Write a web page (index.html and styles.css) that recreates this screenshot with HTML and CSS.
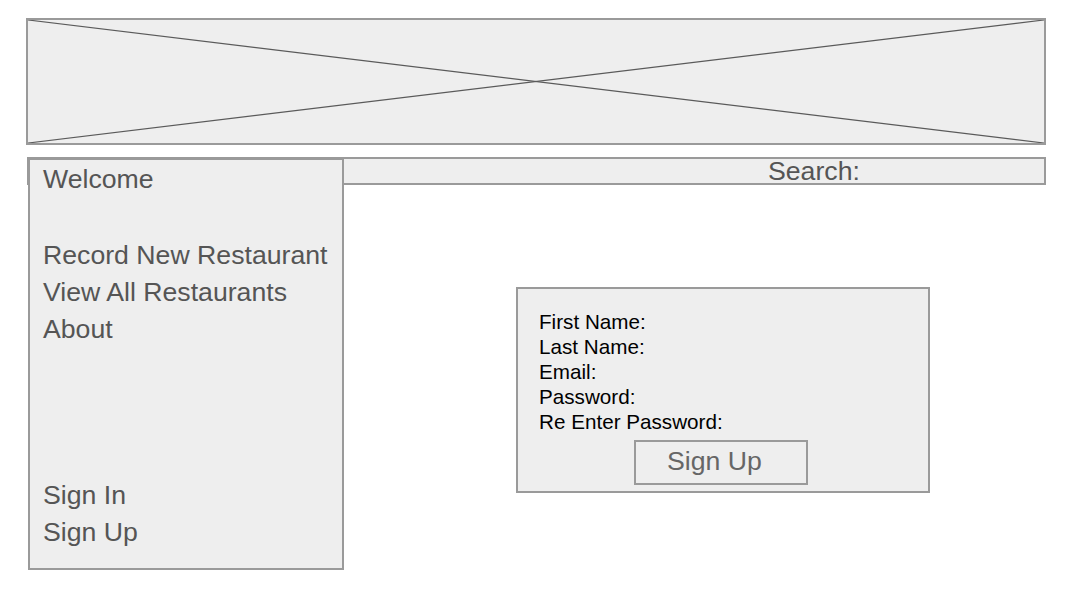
FILE: index.html
```html
<!DOCTYPE html>
<html lang="en">
<head>
<meta charset="utf-8">
<title>Sign Up</title>
<link rel="stylesheet" href="styles.css">
</head>
<body>
<div class="page">
  <div class="banner">
    <svg class="banner-x" viewBox="0 0 100 100" preserveAspectRatio="none">
      <line x1="0" y1="0" x2="100" y2="100" vector-effect="non-scaling-stroke"/>
      <line x1="0" y1="100" x2="100" y2="0" vector-effect="non-scaling-stroke"/>
    </svg>
  </div>
  <div class="main">
    <div class="search">Search:</div>
    <nav class="sidebar">
      <div class="nav-top">
        <div class="nav-item welcome">Welcome</div>
        <div class="nav-item">Record New Restaurant</div>
        <div class="nav-item">View All Restaurants</div>
        <div class="nav-item">About</div>
      </div>
      <div class="nav-bottom">
        <div class="nav-item">Sign In</div>
        <div class="nav-item">Sign Up</div>
      </div>
    </nav>
    <div class="content">
      <div class="form">
        <div class="field">First Name:</div>
        <div class="field">Last Name:</div>
        <div class="field">Email:</div>
        <div class="field">Password:</div>
        <div class="field">Re Enter Password:</div>
        <div class="button">Sign Up</div>
      </div>
    </div>
  </div>
</div>
</body>
</html>
```
FILE: styles.css
```css
html, body {
  margin: 0;
  padding: 0;
  background: #ffffff;
}
body {
  font-family: "Liberation Sans", Arial, sans-serif;
}
.page {
  padding: 18px 0 0 26px;
  width: 1020px;
}
.banner {
  box-sizing: border-box;
  width: 1020px;
  height: 127px;
  border: 2px solid #9a9a9a;
  background: #eeeeee;
}
.banner-x {
  display: block;
  width: 100%;
  height: 100%;
}
.banner-x line {
  stroke: #5a5a5a;
  stroke-width: 1.2;
}
.main {
  margin: 12px 0 0 1px;
  width: 1019px;
  display: grid;
  grid-template-columns: 316px 1fr;
  grid-template-rows: 28px auto;
}
.search {
  grid-column: 1 / 3;
  grid-row: 1;
  box-sizing: border-box;
  height: 28px;
  border: 2px solid #9a9a9a;
  background: #eeeeee;
  color: #555555;
  font-size: 26.67px;
  line-height: 24px;
  padding-left: 739px;
  overflow: visible;
  white-space: nowrap;
}
.sidebar {
  grid-column: 1;
  grid-row: 1 / 3;
  z-index: 1;
  margin: 1px 0 0 1px;
  box-sizing: border-box;
  width: 316px;
  height: 412px;
  border: 2px solid #9a9a9a;
  background: #eeeeee;
  padding: 1px 0 17px 13px;
  display: flex;
  flex-direction: column;
  justify-content: space-between;
  color: #555555;
  font-size: 26.67px;
  line-height: 37px;
}
.nav-item {
  white-space: nowrap;
}
.welcome {
  margin-bottom: 39px;
}
.content {
  grid-column: 2;
  grid-row: 2;
}
.form {
  box-sizing: border-box;
  margin: 102px 0 0 173px;
  width: 414px;
  height: 206px;
  border: 2px solid #9a9a9a;
  background: #eeeeee;
  padding: 20px 0 0 21px;
  color: #000000;
  font-size: 20.67px;
  line-height: 25px;
}
.button {
  box-sizing: border-box;
  margin: 6px 0 0 95px;
  width: 174px;
  height: 45px;
  border: 2px solid #9a9a9a;
  color: #666666;
  font-size: 26.67px;
  line-height: 39px;
  padding-left: 31px;
}
```
